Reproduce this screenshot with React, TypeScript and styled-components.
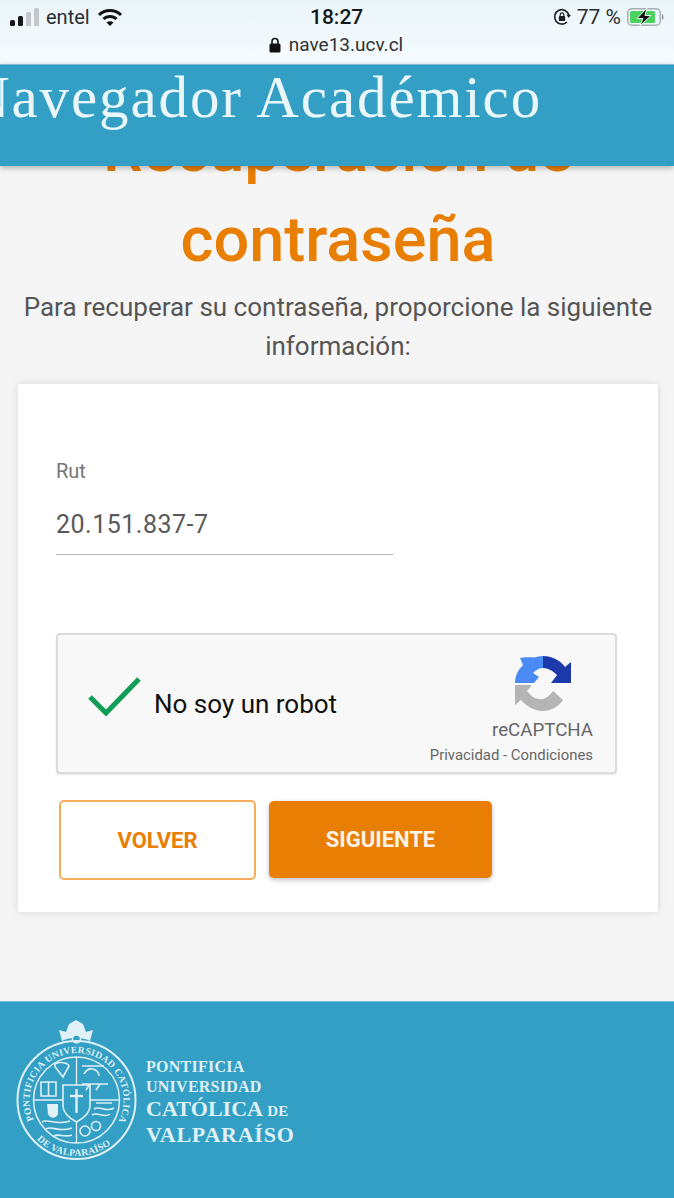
import * as React from 'react';
import styled, { createGlobalStyle } from 'styled-components';

const blue = '#339fc4';
const orange = '#e97e04';

const GlobalStyle = createGlobalStyle`
  html, body {
    margin: 0;
    padding: 0;
    background: #f5f5f5;
  }
  body {
    font-family: Roboto, "Liberation Sans", sans-serif;
  }
  * {
    box-sizing: border-box;
  }
`;

const Page = styled.div`
  width: 674px;
  height: 1198px;
  display: flex;
  flex-direction: column;
  overflow: hidden;
  background: #f5f5f5;
`;

const StatusBar = styled.div`
  height: 64px;
  flex: none;
  padding: 5px 9px 0 10px;
  background: linear-gradient(#eaf5fa, #f6fbfe);
  color: #2a2d30;
`;

const StatusRow = styled.div`
  height: 24px;
  display: grid;
  grid-template-columns: 300px auto 1fr;
  align-items: center;
`;

const StatusLeft = styled.div`
  display: flex;
  align-items: center;
  gap: 7px;
  font-size: 20px;
`;

const StatusRight = styled.div`
  display: flex;
  align-items: center;
  justify-content: flex-end;
  gap: 6px;
  font-size: 21px;
`;

const Clock = styled.div`
  font-size: 21px;
  font-weight: 500;
  color: #15181b;
`;

const UrlRow = styled.div`
  margin-top: 4px;
  padding-right: 3px;
  display: flex;
  align-items: center;
  justify-content: center;
  gap: 8px;
  font-size: 19px;
  color: #2f3337;
`;

const TopBar = styled.header`
  position: relative;
  z-index: 2;
  height: 102px;
  flex: none;
  background: ${blue};
  border-top: 1px solid #7fbcd3;
  box-shadow: 0 2px 6px rgba(0, 0, 0, 0.28);
  overflow: hidden;
`;

const Brand = styled.div`
  margin-left: -33px;
  font-family: "Liberation Serif", serif;
  font-size: 59px;
  line-height: 65px;
  letter-spacing: 1.9px;
  white-space: nowrap;
  color: #e9f6fa;
`;

const Main = styled.main`
  flex: 1;
  margin-top: -61px;
  padding-left: 2px;
  display: flex;
  flex-direction: column;
  align-items: center;
`;

const Title = styled.h1`
  margin: 0;
  font-size: 63px;
  font-weight: 500;
  line-height: 90px;
  white-space: nowrap;
  text-align: center;
  color: ${orange};
`;

const Intro = styled.p`
  margin: 3px 0 0;
  width: 640px;
  font-size: 26px;
  line-height: 39px;
  text-align: center;
  color: #555;
`;

const Card = styled.section`
  margin-top: 18px;
  width: 640px;
  height: 528px;
  padding: 74px 38px 0;
  background: #fff;
  box-shadow: 0 0 8px rgba(0, 0, 0, 0.12);
`;

const FieldLabel = styled.div`
  font-size: 20px;
  line-height: 26px;
  color: #757575;
`;

const FieldValue = styled.div`
  margin-top: 26px;
  width: 337px;
  height: 45px;
  font-size: 25px;
  line-height: 30px;
  letter-spacing: 0.5px;
  color: #5a5a5a;
  border-bottom: 1px solid #b5b5b5;
`;

const Captcha = styled.div`
  margin-top: 78px;
  width: 561px;
  height: 141px;
  padding: 0 22px 0 30px;
  display: flex;
  align-items: center;
  justify-content: space-between;
  background: #f8f8f8;
  border: 2px solid #dcdcdc;
  border-radius: 4px;
  box-shadow: 0 1px 2px rgba(0, 0, 0, 0.1);
`;

const CaptchaLabel = styled.div`
  display: flex;
  align-items: center;
  gap: 13px;
  font-size: 26px;
  color: #111;
`;

const CheckMark = styled.svg`
  width: 53px;
  height: 39px;
  margin-top: -14px;
`;

const CaptchaBrand = styled.div`
  align-self: stretch;
  padding-top: 21px;
  display: flex;
  flex-direction: column;
  align-items: flex-end;
  color: #666;
`;

const CaptchaIcon = styled.svg`
  width: 56px;
  height: 55px;
  margin-right: 22px;
`;

const CaptchaName = styled.div`
  margin-top: 7px;
  font-size: 18.7px;
  line-height: 24px;
`;

const CaptchaLinks = styled.div`
  margin-top: 2px;
  font-size: 14.9px;
  line-height: 22px;
`;

const Actions = styled.div`
  margin-top: 26px;
  margin-left: 3px;
  display: flex;
  gap: 13px;
`;

const Button = styled.button<{ $primary?: boolean }>`
  width: ${(p) => (p.$primary ? '223px' : '197px')};
  height: ${(p) => (p.$primary ? '77px' : '80px')};
  margin-top: ${(p) => (p.$primary ? '1px' : '0')};
  padding: 0;
  font-family: inherit;
  font-size: 22px;
  font-weight: 700;
  color: ${(p) => (p.$primary ? '#fdf3e6' : orange)};
  background: ${(p) => (p.$primary ? orange : '#fff')};
  border: ${(p) => (p.$primary ? 'none' : '2px solid #f5ac5c')};
  border-radius: 5px;
  box-shadow: ${(p) => (p.$primary ? '0 2px 5px rgba(0, 0, 0, 0.25)' : 'none')};
`;

const Footer = styled.footer`
  height: 197px;
  flex: none;
  padding: 16px 0 0 12px;
  display: flex;
  gap: 6px;
  background: ${blue};
  border-top: 1px solid #7fbcd3;
`;

const Seal = styled.svg`
  width: 128px;
  height: 144px;
  flex: none;
`;

const Wordmark = styled.div`
  padding-top: 39px;
  font-family: "Liberation Serif", serif;
  font-weight: 700;
  color: #dff0f6;
`;

const WordSmall = styled.div`
  font-size: 16px;
  line-height: 20px;
  letter-spacing: 0.25px;
`;

const WordLarge = styled.div<{ $spacing: number }>`
  font-size: 22px;
  line-height: 23px;
  letter-spacing: ${(p) => p.$spacing}px;
`;

const WordDe = styled.span`
  font-size: 15px;
  letter-spacing: 0.3px;
`;

const SignalIcon = () => (
  <svg width="29" height="20" viewBox="0 0 29 20">
    <rect x="0" y="13" width="5" height="6" rx="1.5" fill="#17191c" />
    <rect x="8" y="9" width="5" height="10" rx="1.5" fill="#17191c" />
    <rect x="16" y="5" width="5" height="14" rx="1.5" fill="#c3c7ca" />
    <rect x="24" y="1" width="5" height="18" rx="1.5" fill="#c3c7ca" />
  </svg>
);

const WifiIcon = () => (
  <svg width="26" height="19" viewBox="0 0 26 19" fill="none" stroke="#111" strokeWidth="3">
    <path d="M2 7 C8 1 18 1 24 7" />
    <path d="M6.5 11 C10 7.5 16 7.5 19.5 11" />
    <path d="M13 18 L9.5 14.5 C11.5 12.8 14.5 12.8 16.5 14.5 Z" fill="#111" stroke="none" />
  </svg>
);

const RotationLockIcon = () => (
  <svg width="18" height="18" viewBox="0 0 20 20" fill="none">
    <path d="M15.5 15.5 A8 8 0 1 1 17.6 8" stroke="#1d1f22" strokeWidth="1.8" />
    <path d="M15 7.5 L20 7.5 L17.5 11 Z" fill="#1d1f22" />
    <rect x="6.5" y="9" width="7" height="5.5" rx="1" fill="#1d1f22" />
    <path d="M8 9 V7.5 A2 2 0 0 1 12 7.5 V9" stroke="#1d1f22" strokeWidth="1.3" />
  </svg>
);

const BatteryIcon = () => (
  <svg width="38" height="20" viewBox="0 0 38 20">
    <rect x="0.75" y="1.75" width="32.5" height="16.5" rx="4" fill="none" stroke="#a9adaf" strokeWidth="1.5" />
    <rect x="3" y="4" width="25" height="12" rx="1.5" fill="#4cd25f" />
    <path d="M35 7 C37 8 37 12 35 13 Z" fill="#8c9092" />
    <path d="M20 1 L10 11.5 H16 L13 19 L24 8.5 H18 Z" fill="#111" stroke="#eaf7ee" strokeWidth="1" />
  </svg>
);

const LockIcon = () => (
  <svg width="12" height="16" viewBox="0 0 12 16">
    <path d="M3 7 V4.5 A3 3 0 0 1 9 4.5 V7" fill="none" stroke="#111" strokeWidth="1.6" />
    <rect x="0.5" y="6.5" width="11" height="9" rx="1.5" fill="#111" />
  </svg>
);

const CheckIcon = () => (
  <CheckMark viewBox="0 0 53 39" fill="none">
    <path d="M2 20 L18 36 L51 2" stroke="#0f9d58" strokeWidth="5" />
  </CheckMark>
);

const RecaptchaLogo = () => (
  <CaptchaIcon viewBox="0 0 56 55">
    <path d="M28 0 C37 0 45 4 50 11 L56 6 V27 H36 L42 19 C38 15 33 12 28 12 Z" fill="#1c3aa9" />
    <path d="M28 0 V12 C24 12 21 14 18 17 L24 21 L19 27 H0 C0 20 3 14 8 9 L5 2 C7 1 16 1 19 1.5 C22 0.5 25 0 28 0 Z" fill="#4a8af4" />
    <path d="M0 29 H17 L12 35 C16 39 17 42 24 43 C31 44 35 39 38 35 L48 44 C43 51 36 55 28 55 C19 55 11 50 6 44 L0 49 Z" fill="#b5b5b5" />
    <path d="M17 29 H20 C20 25 24 22 28 22 L32 17 L34 24 L28 31 L32 38 C26 40 19 36 17 29 Z" fill="#f8f8f8" />
  </CaptchaIcon>
);

const SealLogo = () => (
  <Seal viewBox="0 0 128 144" fill="none" stroke="#dff0f6">
    <defs>
      <path id="sealTop" d="M21.9 101.9 A47 47 0 1 1 107.1 101.9" />
      <path id="sealBottom" d="M24.9 121.6 A56 56 0 0 0 104.1 121.6" />
    </defs>
    <path d="M50 23 L47 12 L54 14 L57 6 L64 2 L71 6 L74 14 L81 12 L78 23 C72 19 56 19 50 23 Z" fill="#dff0f6" stroke="none" />
    <circle cx="64.5" cy="21" r="4" fill={blue} stroke="#dff0f6" strokeWidth="1.5" />
    <circle cx="64.5" cy="82" r="59" strokeWidth="2" />
    <circle cx="64.5" cy="82" r="43" strokeWidth="1.5" />
    <text fontFamily="Liberation Serif, serif" fontSize="9.6" fontWeight="700" fill="#dff0f6" stroke="none" letterSpacing="0.3">
      <textPath href="#sealTop">PONTIFICIA UNIVERSIDAD CATÓLICA</textPath>
    </text>
    <text fontFamily="Liberation Serif, serif" fontSize="9.6" fontWeight="700" fill="#dff0f6" stroke="none" letterSpacing="0.3">
      <textPath href="#sealBottom">DE VALPARAÍSO</textPath>
    </text>
    <path d="M64.5 39 V125 M21.5 82 H107.5" strokeWidth="1.3" />
    <path d="M51 67 H78 V88 C78 96 70 101 64.5 104 C59 101 51 96 51 88 Z" fill={blue} strokeWidth="1.6" />
    <path d="M64.5 71 V95 M58 78 H71" strokeWidth="2.4" />
    <path d="M44 50 C38 43 56 43 57 48 L51 59 Z" strokeWidth="1.6" />
    <path d="M29 64 H44 V78 H29 Z M36.5 64 V78" strokeWidth="1.6" />
    <path d="M70 48 H92 M72 56 C76 48 86 50 87 58 M70 66 H96 M74 72 L78 66 M84 72 L88 66" strokeWidth="1.6" />
    <path d="M84 85 L100 85 M82 91 C88 87 94 95 102 90 M80 97 C86 93 92 101 98 96" strokeWidth="1.6" />
    <path d="M35 86 H46 V96 C44 101 38 101 36 96 Z" fill="#dff0f6" stroke="none" />
    <path d="M30 104 C36 100 42 108 58 103 M34 111 C40 107 46 115 60 110 M42 118 C46 115 52 120 60 117" strokeWidth="1.6" />
    <circle cx="73" cy="113" r="5" strokeWidth="1.6" />
    <circle cx="84" cy="108" r="4.5" strokeWidth="1.6" />
  </Seal>
);

const App = () => (
  <Page>
    <GlobalStyle />
    <StatusBar>
      <StatusRow>
        <StatusLeft>
          <SignalIcon />
          <span>entel</span>
          <WifiIcon />
        </StatusLeft>
        <Clock>18:27</Clock>
        <StatusRight>
          <RotationLockIcon />
          <span>77 %</span>
          <BatteryIcon />
        </StatusRight>
      </StatusRow>
      <UrlRow>
        <LockIcon />
        <span>nave13.ucv.cl</span>
      </UrlRow>
    </StatusBar>
    <TopBar>
      <Brand>Navegador Académico</Brand>
    </TopBar>
    <Main>
      <Title>
        Recuperación de
        <br />
        contraseña
      </Title>
      <Intro>Para recuperar su contraseña, proporcione la siguiente información:</Intro>
      <Card>
        <FieldLabel>Rut</FieldLabel>
        <FieldValue>20.151.837-7</FieldValue>
        <Captcha>
          <CaptchaLabel>
            <CheckIcon />
            <span>No soy un robot</span>
          </CaptchaLabel>
          <CaptchaBrand>
            <RecaptchaLogo />
            <CaptchaName>reCAPTCHA</CaptchaName>
            <CaptchaLinks>Privacidad - Condiciones</CaptchaLinks>
          </CaptchaBrand>
        </Captcha>
        <Actions>
          <Button>VOLVER</Button>
          <Button $primary>SIGUIENTE</Button>
        </Actions>
      </Card>
    </Main>
    <Footer>
      <SealLogo />
      <Wordmark>
        <WordSmall>PONTIFICIA</WordSmall>
        <WordSmall>UNIVERSIDAD</WordSmall>
        <WordLarge $spacing={0}>
          CATÓLICA <WordDe>DE</WordDe>
        </WordLarge>
        <WordLarge $spacing={0.75}>VALPARAÍSO</WordLarge>
      </Wordmark>
    </Footer>
  </Page>
);

export default App;
